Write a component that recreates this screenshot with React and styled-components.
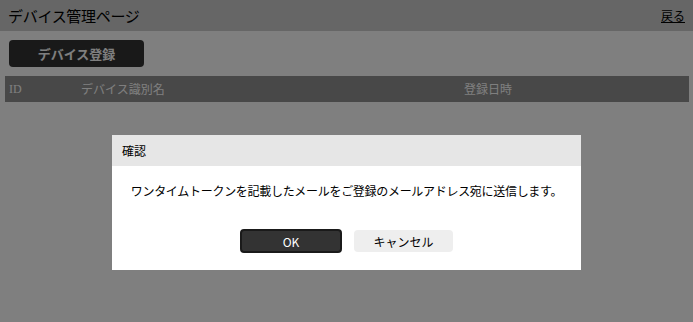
import React from 'react'
import styled, { createGlobalStyle } from 'styled-components'

const GlobalStyle = createGlobalStyle`
  html, body {
    margin: 0;
    padding: 0;
    background: #fff;
    font-family: "Noto Sans CJK JP", "Noto Sans", sans-serif;
  }
`

const Page = styled.div`
  width: 693px;
  height: 322px;
  position: relative;
  overflow: hidden;
`

const Header = styled.header`
  height: 31px;
  background: #cccccc;
  display: flex;
  align-items: center;
  justify-content: space-between;
  padding: 0 8px;
`

const Title = styled.h1`
  margin: 0;
  font-size: 15px;
  font-weight: normal;
  letter-spacing: -0.3px;
  color: #000;
`

const BackLink = styled.a`
  font-size: 12px;
  color: #000;
  text-decoration: underline;
`

const Toolbar = styled.div`
  padding: 9px;
`

const PrimaryButton = styled.button`
  width: 135px;
  height: 27px;
  border: none;
  border-radius: 4px;
  background: #333;
  color: #fff;
  font-family: inherit;
  font-size: 13px;
  font-weight: bold;
  padding: 0;
`

const TableHead = styled.div`
  margin: 0 4px 0 5px;
  height: 26px;
  background: #909090;
  display: grid;
  grid-template-columns: 72px 383px 1fr;
  align-items: center;
  color: #fff;
  font-family: "Liberation Serif", "Noto Sans CJK JP", serif;
  font-size: 12px;
`

const HeadCell = styled.div`
  padding-left: 4px;
`

const Overlay = styled.div`
  position: absolute;
  inset: 0;
  background: rgba(0, 0, 0, 0.5);
  display: flex;
  justify-content: center;
  align-items: flex-start;
  padding-top: 135px;
`

const Dialog = styled.div`
  width: 469px;
  height: 135px;
  background: #fff;
  display: flex;
  flex-direction: column;
`

const DialogHeader = styled.div`
  height: 31px;
  background: #e6e6e6;
  display: flex;
  align-items: center;
  padding-left: 10px;
  font-size: 12px;
  color: #000;
`

const Message = styled.p`
  margin: 16px 0 0;
  text-align: center;
  font-size: 12px;
  letter-spacing: -0.3px;
  color: #000;
`

const Actions = styled.div`
  display: flex;
  justify-content: center;
  gap: 12px;
  margin-top: 30px;
`

const DialogButton = styled.button`
  width: ${p => (p.$primary ? '102px' : '99px')};
  height: ${p => (p.$primary ? '24px' : '22px')};
  margin-top: ${p => (p.$primary ? '0' : '1px')};
  border: ${p => (p.$primary ? '2px solid #1a1a1a' : 'none')};
  border-radius: 4px;
  background: ${p => (p.$primary ? '#333' : '#eee')};
  color: ${p => (p.$primary ? '#fff' : '#000')};
  font-family: inherit;
  font-size: 12px;
  padding: 0;
`

export default function App() {
  return (
    <Page>
      <GlobalStyle />
      <Header>
        <Title>デバイス管理ページ</Title>
        <BackLink href="#">戻る</BackLink>
      </Header>
      <Toolbar>
        <PrimaryButton>デバイス登録</PrimaryButton>
      </Toolbar>
      <TableHead>
        <HeadCell>ID</HeadCell>
        <HeadCell>デバイス識別名</HeadCell>
        <HeadCell>登録日時</HeadCell>
      </TableHead>
      <Overlay>
        <Dialog>
          <DialogHeader>確認</DialogHeader>
          <Message>ワンタイムトークンを記載したメールをご登録のメールアドレス宛に送信します。</Message>
          <Actions>
            <DialogButton $primary>OK</DialogButton>
            <DialogButton>キャンセル</DialogButton>
          </Actions>
        </Dialog>
      </Overlay>
    </Page>
  )
}
